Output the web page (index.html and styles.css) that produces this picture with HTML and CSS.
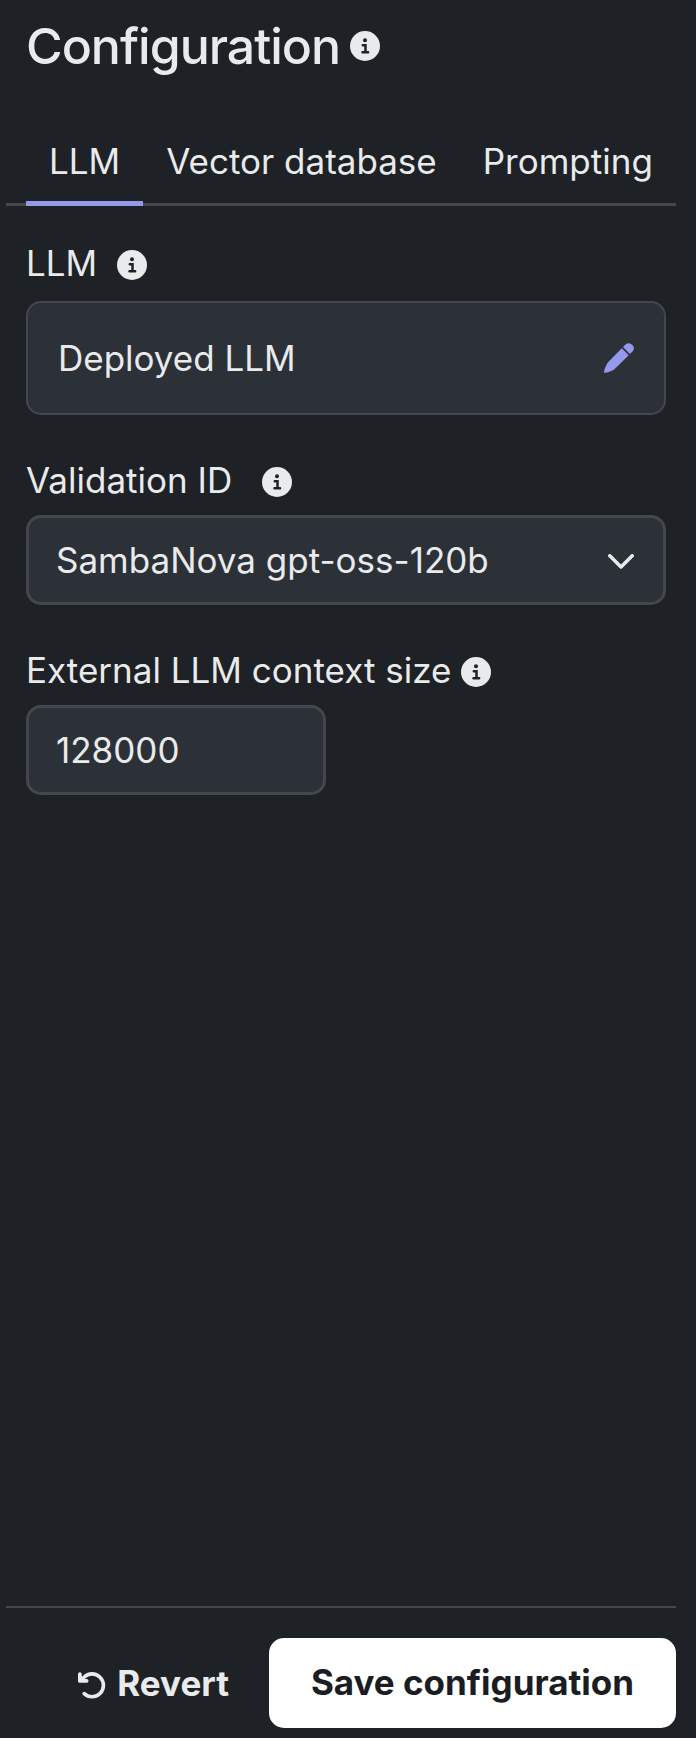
FILE: index.html
```html
<!DOCTYPE html>
<html lang="en">
<head>
<meta charset="utf-8">
<title>Configuration</title>
<link rel="stylesheet" href="styles.css">
</head>
<body>
<svg width="0" height="0" class="defs">
  <symbol id="info" viewBox="0 0 30 30">
    <circle class="info-disc" cx="15" cy="15" r="15"/>
    <circle class="info-mark" cx="15" cy="9.3" r="2"/>
    <path class="info-stem" d="M12.8 14.2h2.7v6.8M12.5 21.2h5.6"/>
  </symbol>
</svg>
<main class="panel">
  <header class="heading">
    <h1 class="title">Configuration</h1>
    <svg class="info"><use href="#info"/></svg>
  </header>
  <nav class="tabs">
    <a class="tab tab-active">LLM</a>
    <a class="tab">Vector database</a>
    <a class="tab">Prompting</a>
  </nav>
  <section class="form">
    <div class="field">
      <div class="label label-llm"><span>LLM</span><svg class="info"><use href="#info"/></svg></div>
      <div class="card"><span>Deployed LLM</span>
        <svg class="pencil" viewBox="0 0 30 30"><path d="M17.8 5.3 24.7 12.2 11.5 25.2Q10 26.8 7.8 27.8Q4 29.7 0 30Q.3 25.6 2.5 21.8Q3.2 20 4.5 18.7ZM19 4.1 21.5 1.6Q24.8-1.2 28.2 1.8Q31.4 5.2 28.7 8.2L25.9 11Z"/></svg>
      </div>
    </div>
    <div class="field">
      <div class="label label-validation"><span>Validation ID</span><svg class="info"><use href="#info"/></svg></div>
      <div class="control"><span>SambaNova gpt-oss-120b</span>
        <svg class="chevron" viewBox="0 0 26 15"><path d="M1.8 1.8 13 12.9 24.2 1.8"/></svg>
      </div>
    </div>
    <div class="field">
      <div class="label"><span>External LLM context size</span><svg class="info"><use href="#info"/></svg></div>
      <div class="control control-short"><span>128000</span></div>
    </div>
  </section>
  <footer class="actions">
    <button class="button revert"><svg class="undo" viewBox="0 0 27 27"><path class="undo-arc" d="M6 5.2A11.4 11.4 0 1 1 6.2 21.6"/><path class="undo-head" d="M0 1.5Q1.8-.9 3.7 1.5V4L7 6.9H9.3Q11.8 8.8 9.3 10.8H1.6Q0 10.8 0 9.2Z"/></svg><span>Revert</span></button>
    <button class="button save">Save configuration</button>
  </footer>
</main>
</body>
</html>
```

FILE: styles.css
```css
* { box-sizing: border-box; }
body { margin: 0; background: #1e2125; color: #e9eaeb; font: 400 35px/50px Inter, sans-serif; }
.defs { position: absolute; }
.panel { height: 1738px; padding: 0 20px 10px 6px; display: flex; flex-direction: column; }
.info { width: 30px; height: 30px; flex: none; }
.info-disc { fill: #e9eaeb; }
.info-mark { fill: #1e2125; }
.info-stem { fill: none; stroke: #1e2125; stroke-width: 2.5; stroke-linecap: round; }
.heading { display: flex; align-items: center; gap: 10px; height: 92px; padding-left: 20px; }
.title { margin: 0; font-size: 50px; line-height: 60px; font-weight: 500; letter-spacing: -1px; }
.tabs { display: flex; height: 114px; padding: 44px 0 0 20px; border-bottom: 3px solid #44474b; }
.tab { height: 70px; padding: 0 23px; white-space: nowrap; }
.tab-active { border-bottom: 5px solid #9499ed; }
.form { flex: 1; padding: 32px 10px 0 20px; }
.label { display: flex; align-items: center; gap: 10px; height: 50px; }
.label .info { margin-top: 4px; }
.label-llm { gap: 20px; }
.label-validation { gap: 30px; }
.field { margin-bottom: 40px; }
.card { display: flex; align-items: center; justify-content: space-between; height: 114px; margin-top: 13px; padding: 0 30px; background: #2c3037; border: 2px solid #44474b; border-radius: 15px; }
.pencil { width: 30px; height: 30px; fill: #9499ed; }
.control { display: flex; align-items: center; justify-content: space-between; height: 90px; padding: 0 29px 0 27px; background: #2c3037; border: 3px solid #44474b; border-radius: 15px; margin-top: 10px; }
.control-short { width: 300px; }
.chevron { width: 26px; height: 15px; margin-top: 3px; fill: none; stroke: #e9eaeb; stroke-width: 3.5; stroke-linecap: round; stroke-linejoin: round; }
.actions { display: flex; justify-content: flex-end; padding-top: 30px; border-top: 2px solid #44474b; }
.button { display: flex; align-items: center; justify-content: center; height: 90px; padding: 0; border: 0; border-radius: 15px; font: 700 35px/50px Inter, sans-serif; white-space: nowrap; }
.revert { gap: 12px; margin-right: 40px; color: #e9eaeb; background: none; }
.undo { width: 27px; height: 27px; margin-top: 4px; overflow: visible; }
.undo-arc { fill: none; stroke: #e9eaeb; stroke-width: 3.6; stroke-linecap: round; }
.undo-head { fill: #e9eaeb; }
.save { width: 407px; padding-bottom: 2px; background: #fff; color: #1b1d22; }
```
